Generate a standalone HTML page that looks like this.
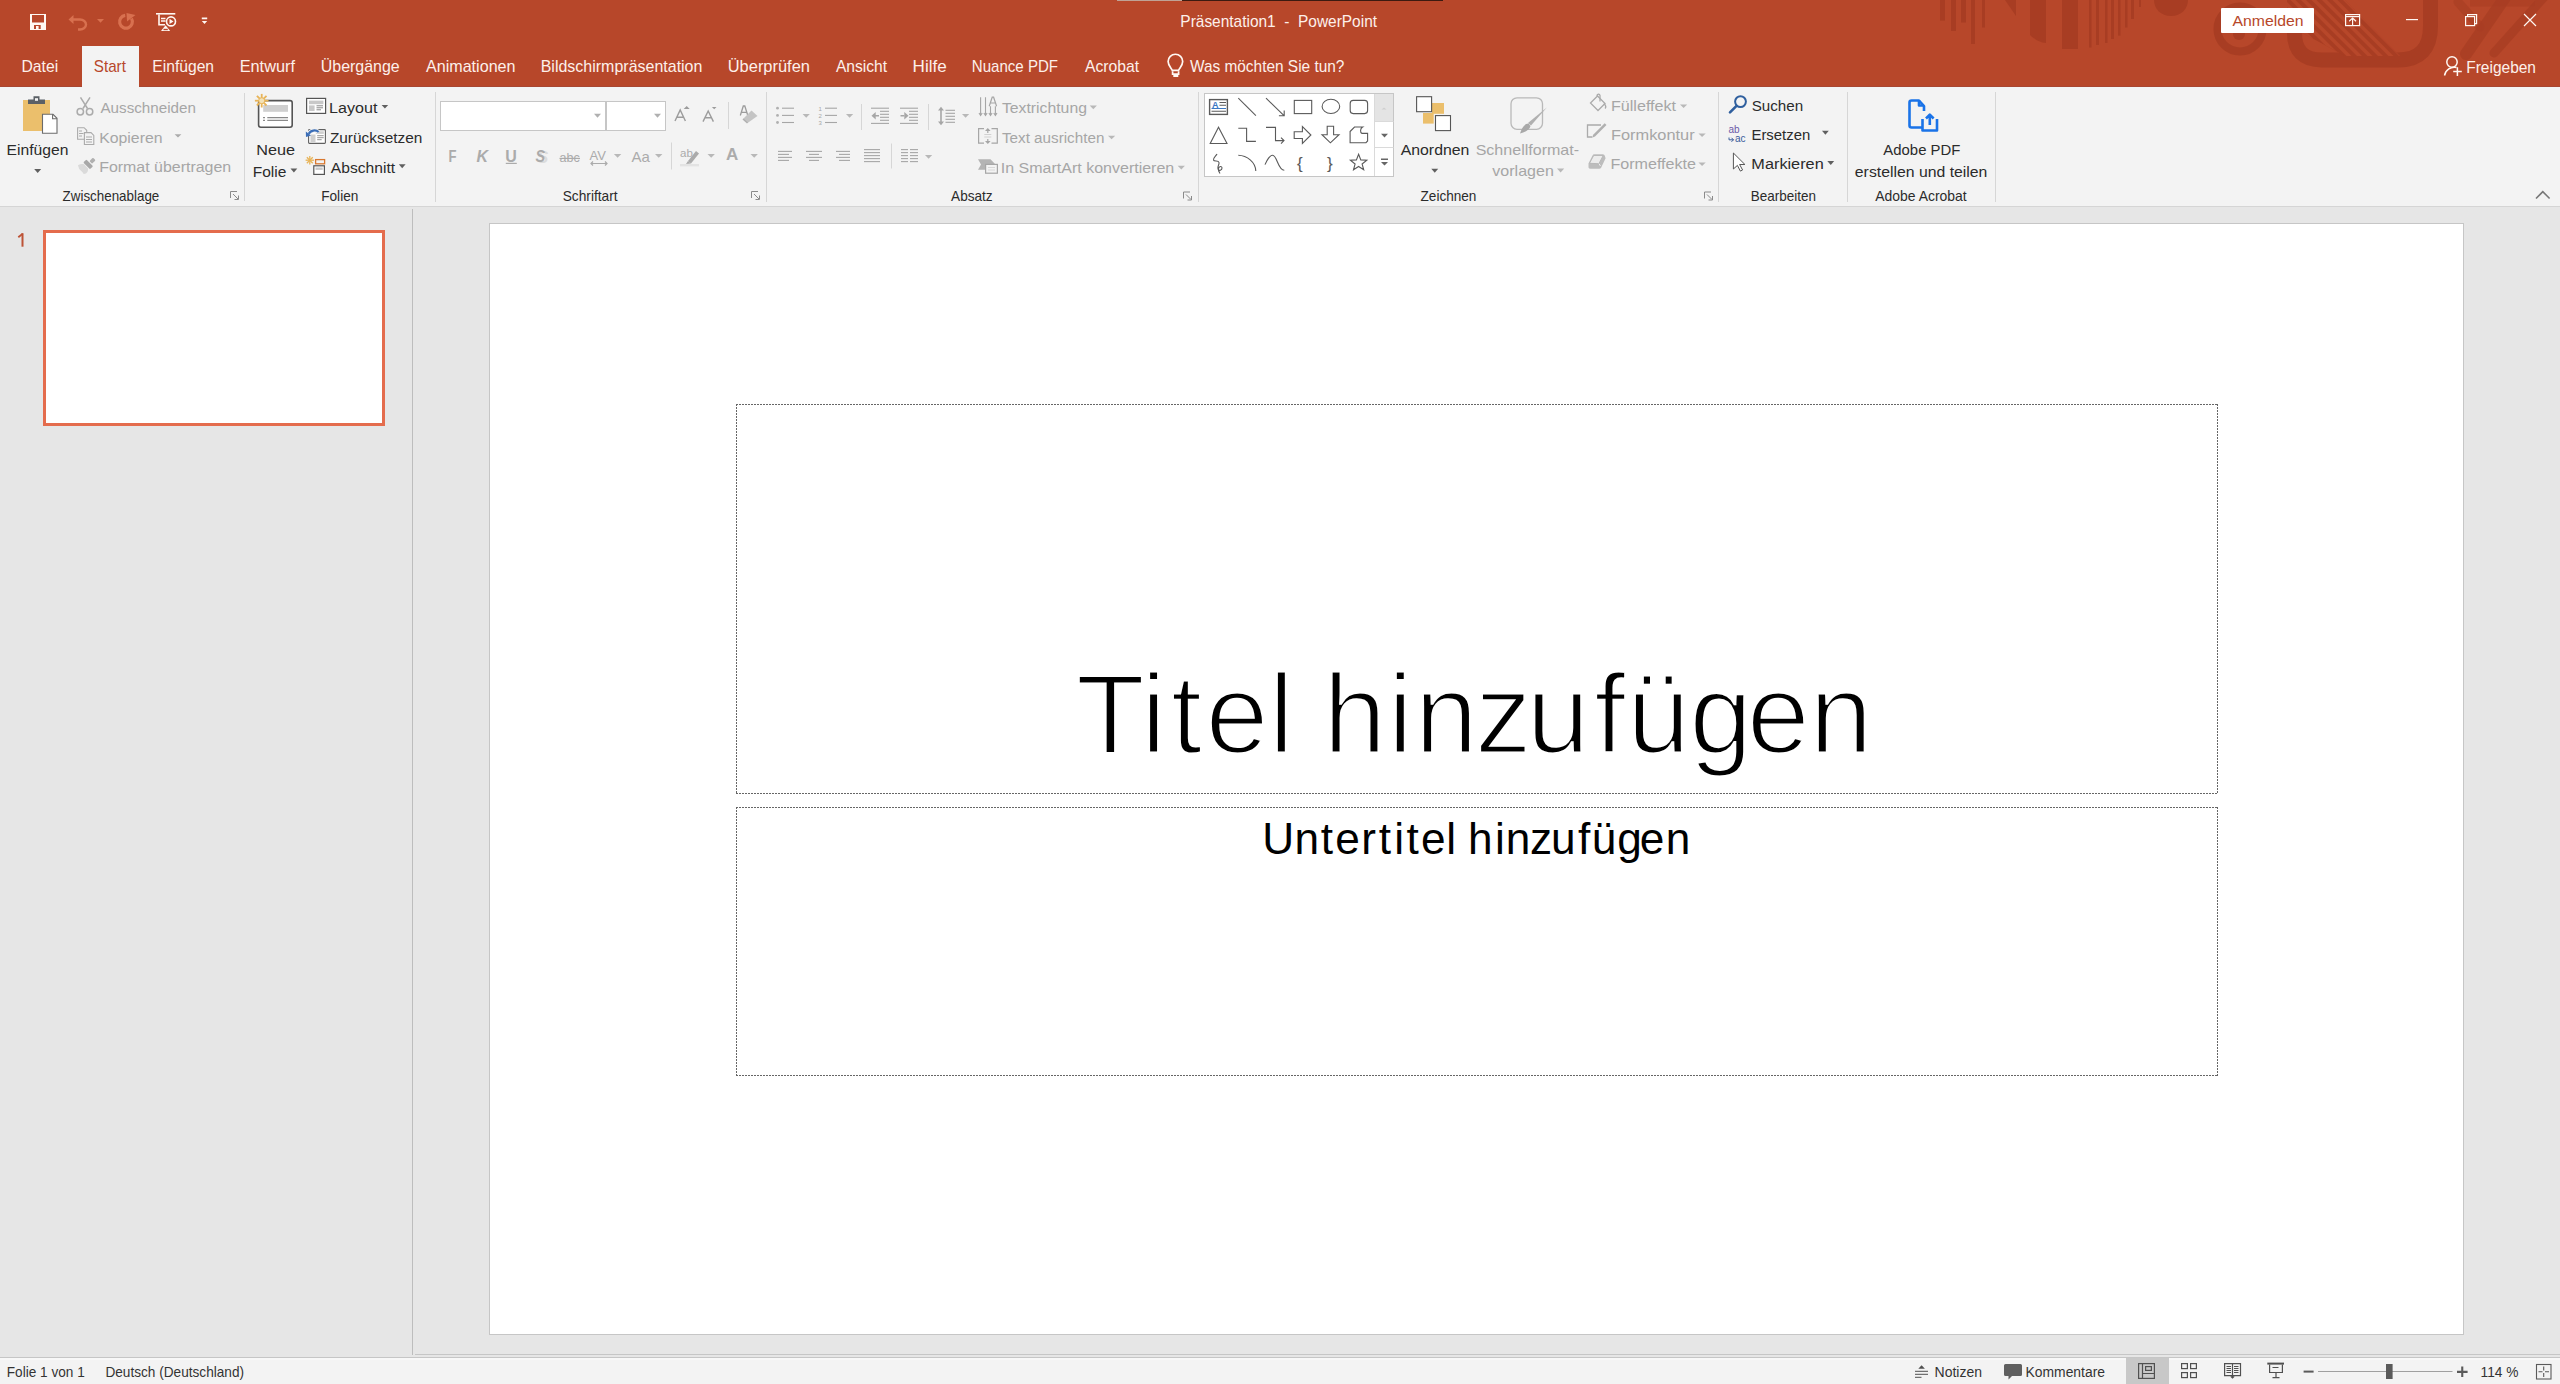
<!DOCTYPE html>
<html><head><meta charset="utf-8"><title>Präsentation1 - PowerPoint</title>
<style>
html,body{margin:0;padding:0;width:2560px;height:1384px;overflow:hidden;background:#e6e6e6;font-family:"Liberation Sans",sans-serif;}
.a{position:absolute;box-sizing:border-box}
svg.ov{position:absolute;left:0;top:0}
svg text{font-family:"Liberation Sans",sans-serif;white-space:pre}
</style></head><body>
<div class="a" style="left:0;top:0;width:2560px;height:87px;background:#b7472a"></div>
<div class="a" style="left:1117px;top:0;width:65px;height:1px;background:#bfa396"></div>
<div class="a" style="left:1182px;top:0;width:261px;height:1px;background:#3c1a10"></div>
<div class="a" style="left:82px;top:46px;width:57px;height:41px;background:#f3f3f3"></div>
<div class="a" style="left:0;top:86px;width:82px;height:1px;background:#a84632"></div><div class="a" style="left:139px;top:86px;width:2421px;height:1px;background:#a84632"></div><div class="a" style="left:0;top:87px;width:2560px;height:119px;background:#f3f3f3"></div>
<div class="a" style="left:0;top:206px;width:2560px;height:1px;background:#d5d5d5"></div>
<div class="a" style="left:412px;top:209px;width:1px;height:1146px;background:#bdbdbd"></div>
<div class="a" style="left:43px;top:230px;width:342px;height:196px;border:3px solid #e46c4d;background:#fff"></div>
<div class="a" style="left:489px;top:223px;width:1975px;height:1112px;border:1px solid #c6c6c6;background:#fff"></div>
<div class="a" style="left:415px;top:1354px;width:2145px;height:1px;background:#c6c6c6"></div>
<div class="a" style="left:0;top:1357px;width:2560px;height:1px;background:#c6c6c6"></div>
<div class="a" style="left:0;top:1358px;width:2560px;height:26px;background:#f3f3f3"></div><div class="a" style="left:0;top:1358px;width:2560px;height:2px;background:#f8f8f8"></div>
<div class="a" style="left:2126px;top:1358px;width:43px;height:26px;background:#c8c8c8"></div>

<svg class="ov" width="2560" height="1384" viewBox="0 0 2560 1384">
<g fill="#a63c22" opacity="0.85"><rect x="1940" y="0" width="5" height="20.6"/><rect x="1951" y="0" width="5" height="31"/><rect x="1961" y="0" width="5" height="22.5"/><rect x="1971" y="0" width="4" height="44"/><rect x="1982" y="0" width="3" height="27.5"/><rect x="2089" y="0" width="2.5" height="47.5"/><rect x="2096" y="0" width="3" height="45"/><rect x="2105" y="0" width="2.5" height="43"/><rect x="2111" y="0" width="3" height="39"/><rect x="2118" y="0" width="2.5" height="35.6"/><rect x="2125" y="0" width="2.5" height="27.5"/><rect x="2131" y="0" width="3" height="19"/><rect x="2139" y="0" width="2" height="7"/><path d="M2030 0h16v43c-6 0-12-4-16-8z"/><path d="M2062 0h16v49h-16z"/><path d="M2005 0h11v16z"/><path d="M2154 0h34c0 9-7 16-17 16s-17-7-17-16z"/><circle cx="2240" cy="29" r="22.5" fill="none" stroke="#a63c22" stroke-width="8"/><circle cx="2239" cy="34" r="6" /><path d="M2294.5 -5V33Q2294.5 60 2322 60H2398Q2430.5 60 2430.5 26V-5" fill="none" stroke="#a63c22" stroke-width="15"/><clipPath id="rc"><path d="M2287 0H2345L2400 56H2345L2287 25z"/></clipPath><g clip-path="url(#rc)"><path d="M2287 0H2345L2400 56H2345L2287 25z"/></g><g clip-path="url(#rc)" stroke="#b7472a" stroke-width="3.5"><path d="M2241.0 -10L2321.0 70"/><path d="M2251.5 -10L2331.5 70"/><path d="M2262.0 -10L2342.0 70"/><path d="M2272.5 -10L2352.5 70"/><path d="M2283.0 -10L2363.0 70"/><path d="M2293.5 -10L2373.5 70"/><path d="M2304.0 -10L2384.0 70"/><path d="M2314.5 -10L2394.5 70"/><path d="M2325.0 -10L2405.0 70"/><path d="M2335.5 -10L2415.5 70"/><path d="M2346.0 -10L2426.0 70"/></g><path d="M2506 -4L2466 54" stroke="#a63c22" stroke-width="12" stroke-linecap="round" opacity="0.75"/><path d="M2545 -4L2494 53" stroke="#a63c22" stroke-width="9" stroke-linecap="round" opacity="0.75"/><path d="M2458 2L2480 27" stroke="#a63c22" stroke-width="9" stroke-linecap="round" opacity="0.6"/><path d="M2470 3L2535 3" stroke="#a63c22" stroke-width="7" opacity="0.5"/></g>
<rect x="2221" y="8" width="93" height="25" rx="1" fill="#fff"/>
<g fill="none" stroke="#666" stroke-width="1" stroke-dasharray="2 1"><path d="M736 404.5H2218M736 793.5H2218M736.5 404V794M2217.5 404V794M736 807.5H2218M736 1075.5H2218M736.5 807V1076M2217.5 807V1076"/></g>
<path d="M21.5 233.2h2v13.5h-2z" fill="#bd5336"/><path d="M18.3 237.2l4.4-3.4" stroke="#bd5336" stroke-width="1.9"/>
<g fill="#fff8f3"><path d="M30 14h16v16h-16z M32 15v7.6h12v-7.6z M34 25v4h2v-3h2.6v3h2.1v-4z" fill-rule="evenodd"/></g>
<g fill="none" stroke="#d8704f" stroke-width="2.4"><path d="M71 19.5h9a6 5 0 0 1 0 10h-2"/></g><path d="M68.5 19.5l5-4.5v9z" fill="#d8704f"/><path d="M97 19l7 0l-3.5 3.8z" fill="#d8704f"/>
<path d="M125.2 15.4A6.4 6.4 0 1 0 131.5 18.5" fill="none" stroke="#d8704f" stroke-width="3.2"/><path d="M126.5 13L135.5 15L127 21.5z" fill="#d8704f"/>
<g fill="none" stroke="#fff8f3" stroke-width="1.6"><path d="M156 13.8h19.3"/><path d="M159 14.5v10.3h6"/><path d="M161 18.5h4.5M161 21h4.5"/><circle cx="171" cy="21.4" r="4.5"/></g><path d="M169.5 18.8l4 2.6l-4 2.6z" fill="#fff8f3"/><path d="M165.6 25.2l4.6 5.8h-9.2z" fill="#fff8f3"/><path d="M163.5 28.8h4.3v1.4h-4.3z" fill="#b7472a"/>
<path d="M201.8 17.6h5.4v1.6h-5.4z M201.8 21h5.4l-2.7 3z" fill="#fff8f3"/>
<g fill="none" stroke="#fff8f3" stroke-width="1.2"><rect x="2345.6" y="14.6" width="14" height="11"/><path d="M2345.6 16.6h14"/><path d="M2352.6 25.6v-7.4M2349.2 21.2l3.4-3.2l3.4 3.2"/><path d="M2406 19.6h12"/><rect x="2465.6" y="16.6" width="9" height="9"/><path d="M2467.6 16.6v-2h9v9h-2"/><path d="M2524 14l12 12M2536 14l-12 12"/></g>
<g fill="none" stroke="#fff8f3" stroke-width="1.7"><path d="M1172.3 70.3c-1.2-2.5-4.2-5-4.2-8.8a7.3 7.3 0 0 1 14.6 0c0 3.8-3 6.3-4.2 8.8z"/><path d="M1172.6 71.2v3h6v-3"/></g><path d="M1173.3 75h5v2h-5z" fill="#fff8f3"/>
<g fill="none" stroke="#fff8f3" stroke-width="1.5"><circle cx="2452" cy="62" r="5.2"/><path d="M2444.5 75.5a10 10 0 0 1 12-8"/><path d="M2457.4 67.3v8.6M2453.2 71.6h8.6"/></g>
<rect x="23" y="100" width="27" height="31" fill="#ebbf6c"/><path d="M28 104v-4.5h5.5v-3.3h6v3.3h5.5v4.5z" fill="#5b6066"/><rect x="35" y="98.2" width="3" height="2.6" fill="#f3f3f3"/><path d="M42.5 114.3h10.5l4 4v15h-14.5z" fill="#fff" stroke="#6b6b6b" stroke-width="1.1"/><path d="M52.6 114.3v4.4h4.4" fill="none" stroke="#6b6b6b" stroke-width="1.1"/><path d="M34.2 169h7l-3.5 4z" fill="#5f5f5f"/>
<g fill="none" stroke="#ababab" stroke-width="1.5"><path d="M80.5 97.3L87.5 108.5M90 97.3L83 108.5"/><circle cx="80.3" cy="111.8" r="3.2"/><circle cx="89.6" cy="111.8" r="3.2"/></g>
<g fill="#f3f3f3" stroke="#ababab" stroke-width="1.1"><path d="M77.6 127.7h6.5l2.6 2.6v9h-9.1z"/><path d="M84.4 132.6h6.6l2.8 2.8v9.1h-9.4z" fill="#f3f3f3"/></g><g stroke="#ababab" stroke-width="1"><path d="M79 131h3M79 133.5h4.5M79 136h3"/><path d="M86 137h6M86 139.5h6M86 142h6"/></g>
<path d="M174.6 134.2h6.8l-3.4 3.4z" fill="#ababab"/>
<g transform="rotate(45 88 164.2)"><rect x="83.5" y="162" width="9.5" height="4.4" rx="1" fill="#a8a8a8"/></g><g transform="rotate(-45 92.5 160.7)"><rect x="90" y="158.8" width="5" height="3.8" rx="1" fill="#b0b0b0"/></g><path d="M78 165.2c2-1.2 4-1.5 6-1l4 4.2c0.3 2-0.5 4-2 5l-2.3 0.5l-1-1.5l-3.5-3.5z" fill="#dadada"/>
<g fill="none" stroke="#8a8a8a" stroke-width="1"><path d="M230.5 198v-6.5h6.5"/><path d="M233 194l5 5M238.5 195.5v4h-4"/></g>
<path d="M244.5 93V201" stroke="#d6d6d6" stroke-width="1"/>
<path d="M435.5 92V202" stroke="#d6d6d6" stroke-width="1"/>
<path d="M766.5 92V202" stroke="#d6d6d6" stroke-width="1"/>
<path d="M1198.5 92V202" stroke="#d6d6d6" stroke-width="1"/>
<path d="M1718.5 92V202" stroke="#d6d6d6" stroke-width="1"/>
<path d="M1847.5 92V202" stroke="#d6d6d6" stroke-width="1"/>
<path d="M1995.5 92V202" stroke="#d6d6d6" stroke-width="1"/>
<rect x="258.6" y="100.6" width="33.6" height="26.6" rx="2.2" fill="#fff" stroke="#555" stroke-width="1.6"/><rect x="263.2" y="105" width="24.8" height="6.8" fill="#cfcfcf"/><g stroke="#8a8a8a" stroke-width="1.2"><path d="M267.3 117.6h20.7M267.3 120.4h20.7M263 117.6h2M263 120.4h2"/></g>
<g stroke="#e8b458" stroke-width="1.8"><path d="M261.7 100.7l6.80 0.00"/><path d="M261.7 100.7l4.81 4.81"/><path d="M261.7 100.7l0.00 6.80"/><path d="M261.7 100.7l-4.81 4.81"/><path d="M261.7 100.7l-6.80 0.00"/><path d="M261.7 100.7l-4.81 -4.81"/><path d="M261.7 100.7l-0.00 -6.80"/><path d="M261.7 100.7l4.81 -4.81"/></g><circle cx="261.7" cy="100.7" r="3" fill="#f3e2b8" stroke="#e8b458" stroke-width="1"/>
<path d="M290.5 168.6h6.8l-3.4 4z" fill="#5f5f5f"/>
<rect x="306.6" y="98.4" width="19" height="15" fill="#fff" stroke="#555" stroke-width="1.2"/><rect x="309" y="100.6" width="14.4" height="3.6" fill="#c8c8c8"/><rect x="309" y="105.4" width="5.6" height="5.6" fill="#c8c8c8"/><g stroke="#7a7a7a" stroke-width="0.9"><path d="M316.5 105.8h6.5M316.5 107.8h6.5M316.5 109.8h4.5"/></g><path d="M381.6 105h6.6l-3.3 3.5z" fill="#5f5f5f"/>
<rect x="308.6" y="129.6" width="16.8" height="13.8" rx="0.8" fill="#fff" stroke="#606060" stroke-width="1.1"/><rect x="310.5" y="134.5" width="5" height="7.5" fill="#cfcfcf"/><rect x="315.8" y="131.3" width="8" height="2.6" fill="#cfcfcf"/><g stroke="#8a8a8a" stroke-width="0.9"><path d="M317.2 135.7h6.5M317.2 137.7h6.5M317.2 139.7h4.5"/></g><path d="M308.8 133.8c1.5-3.5 7-4.5 9.8-1.8" fill="none" stroke="#f3f3f3" stroke-width="4"/><path d="M308.8 133.8c1.5-3.5 7-4.5 9.8-1.8" fill="none" stroke="#3c6fb8" stroke-width="2.2"/><path d="M305.8 131.5l0.2 5.5l5-1.5z" fill="#3c6fb8"/>
<rect x="315.6" y="159.6" width="9" height="4.2" fill="none" stroke="#d9782f" stroke-width="1.3"/><rect x="313.8" y="165.8" width="10.6" height="8.6" fill="#fff" stroke="#555" stroke-width="1.2"/><rect x="315.5" y="167.5" width="7.2" height="2.4" fill="#c8c8c8"/>
<g stroke="#e8b458" stroke-width="1.3"><path d="M309.8 160.2l4.20 0.00"/><path d="M309.8 160.2l2.97 2.97"/><path d="M309.8 160.2l0.00 4.20"/><path d="M309.8 160.2l-2.97 2.97"/><path d="M309.8 160.2l-4.20 0.00"/><path d="M309.8 160.2l-2.97 -2.97"/><path d="M309.8 160.2l-0.00 -4.20"/><path d="M309.8 160.2l2.97 -2.97"/></g>
<path d="M398.8 164.3h6.8l-3.4 4z" fill="#5f5f5f"/>
<rect x="440.5" y="101.5" width="165" height="29" fill="#fff" stroke="#c6c6c6" stroke-width="1"/><rect x="606.5" y="101.5" width="59" height="29" fill="#fff" stroke="#c6c6c6" stroke-width="1"/>
<path d="M594 113.8h7l-3.5 4z M654 113.8h7l-3.5 4z" fill="#b0b0b0"/>
<g fill="none" stroke="#9c9c9c" stroke-width="1.4"><path d="M675 121L680.2 110L685.4 121M677 117.3H683.5"/><path d="M703 121.6L708.2 111L713.4 121.6M705 117.8H711.5"/></g><path d="M683.7 109l3-3l3 3z M711.9 107h4.6l-2.3 2.3z" fill="#9c9c9c"/>
<path d="M728.5 102v27" stroke="#d6d6d6"/>
<path d="M740.3 115.5L743.3 106h1.5l3 9.5M741.5 112.3h5" fill="none" stroke="#9c9c9c" stroke-width="1.3"/><path d="M747.5 123l-4.5-4l8.5-8.5l6 5.5z" fill="#c4c4c4"/><path d="M743 119l4.5 4" stroke="#b0b0b0" stroke-width="1.5"/>
<g fill="#ababab" font-family="Liberation Sans" ><text transform="translate(448.6,161.6) scale(0.82,1)" font-size="16" font-weight="bold">F</text><text x="476.5" y="161.6" font-size="16" font-weight="bold" font-style="italic">K</text><text x="505.2" y="161.6" font-size="16" font-weight="bold">U</text><text x="537.5" y="162.5" font-size="16" font-weight="bold" font-style="italic" fill="#dcdcdc">S</text><text transform="translate(535.6,161.6) scale(0.9,1)" font-size="16" font-weight="bold" font-style="italic">S</text><text x="559.5" y="162.3" font-size="12.5">abc</text><text x="589.5" y="160" font-size="13">AV</text><text x="631.5" y="162" font-size="15">Aa</text><text x="726" y="160.2" font-size="17" font-weight="bold">A</text></g>
<g stroke="#ababab" stroke-width="1.2" fill="none"><path d="M505.8 163.4h11"/><path d="M559.5 158.4h20.5"/><path d="M591 163.5h16M593 161.5l-2 2l2 2M605 161.5l2 2l-2 2"/></g>
<path d="M613.9 154h7.4l-3.7 3.8z" fill="#b8b8b8"/>
<path d="M655 154h7.4l-3.7 3.8z" fill="#b8b8b8"/>
<path d="M707.5 154h7.4l-3.7 3.8z" fill="#b8b8b8"/>
<path d="M750.5 154h7.4l-3.7 3.8z" fill="#b8b8b8"/>
<path d="M671.5 142.5v27" stroke="#d6d6d6"/>
<g fill="#ababab"><text x="680" y="157" font-size="11.5" font-family="Liberation Sans">ab</text><path d="M688 161l8-10l3 2.5l-8 10z"/><path d="M686 164l2-3l3 2.5z"/></g><rect x="680" y="164" width="19" height="2.4" fill="#e3e3e3"/>
<g fill="none" stroke="#8a8a8a" stroke-width="1"><path d="M751.5 198v-6.5h6.5"/><path d="M754 194l5 5M759.5 195.5v4h-4"/></g>
<path d="M782 108.2H794" stroke="#a6a6a6" stroke-width="1.1"/><path d="M782 115.4H794" stroke="#a6a6a6" stroke-width="1.1"/><path d="M782 122.5H794" stroke="#a6a6a6" stroke-width="1.1"/>
<g fill="#b0b0b0"><circle cx="777.5" cy="108.2" r="1.4"/><circle cx="777.5" cy="115.4" r="1.4"/><circle cx="777.5" cy="122.5" r="1.4"/></g>
<path d="M825 108.2H837" stroke="#a6a6a6" stroke-width="1.1"/><path d="M825 115.4H837" stroke="#a6a6a6" stroke-width="1.1"/><path d="M825 122.5H837" stroke="#a6a6a6" stroke-width="1.1"/>
<g fill="#a6a6a6" font-size="6" font-family="Liberation Sans"><text x="818.6" y="111">1</text><text x="818.6" y="118">2</text><text x="818.6" y="125">3</text></g>
<path d="M802.6 113.9h7.2l-3.6 3.8z" fill="#b8b8b8"/>
<path d="M846 113.9h7.2l-3.6 3.8z" fill="#b8b8b8"/>
<path d="M962 113.9h7.2l-3.6 3.8z" fill="#b8b8b8"/>
<path d="M925 155h7.2l-3.6 3.8z" fill="#b8b8b8"/>
<path d="M861.5 104v26M928.5 104v26M891.5 143.5v25" stroke="#d6d6d6"/>
<path d="M871 108.2H889" stroke="#a6a6a6" stroke-width="1.1"/><path d="M871 123.4H889" stroke="#a6a6a6" stroke-width="1.1"/><path d="M880 111.3H889" stroke="#a6a6a6" stroke-width="1.1"/><path d="M880 114.3H889" stroke="#a6a6a6" stroke-width="1.1"/><path d="M880 117.3H889" stroke="#a6a6a6" stroke-width="1.1"/><path d="M880 120.3H889" stroke="#a6a6a6" stroke-width="1.1"/>
<path d="M871.5 115.8l4.2-3.8v7.6z M875 115h4v1.6h-4z" fill="#a6a6a6"/>
<path d="M900 108.2H918" stroke="#a6a6a6" stroke-width="1.1"/><path d="M900 123.4H918" stroke="#a6a6a6" stroke-width="1.1"/><path d="M909 111.3H918" stroke="#a6a6a6" stroke-width="1.1"/><path d="M909 114.3H918" stroke="#a6a6a6" stroke-width="1.1"/><path d="M909 117.3H918" stroke="#a6a6a6" stroke-width="1.1"/><path d="M909 120.3H918" stroke="#a6a6a6" stroke-width="1.1"/>
<path d="M908.5 115.8l-4.2-3.8v7.6z M900.5 115h4v1.6h-4z" fill="#a6a6a6"/>
<path d="M945.5 110.3H955" stroke="#a6a6a6" stroke-width="1.1"/><path d="M945.5 113.3H955" stroke="#a6a6a6" stroke-width="1.1"/><path d="M945.5 116.3H955" stroke="#a6a6a6" stroke-width="1.1"/><path d="M945.5 119.3H955" stroke="#a6a6a6" stroke-width="1.1"/><path d="M945.5 122.3H955" stroke="#a6a6a6" stroke-width="1.1"/>
<path d="M938 110.5l3-3.8l3 3.8z M938 121.5l3 3.8l3-3.8z" fill="#a6a6a6"/><path d="M941 110v12" stroke="#a6a6a6" stroke-width="1.6"/>
<g stroke="#a6a6a6" stroke-width="1.1" fill="none"><path d="M980.6 97.3v17.5M985.5 97.3v17.5M990.5 106.3v8.5M995.4 106.3v8.5"/><path d="M979 113l1.6 2.4l1.6-2.4M983.9 113l1.6 2.4l1.6-2.4M988.9 113l1.6 2.4l1.6-2.4M993.8 113l1.6 2.4l1.6-2.4"/><path d="M989.2 106.2l3-9h1.4l3 9M990.3 103h5.2" stroke-width="1.2"/></g><path d="M1089.7 105.6h7.2l-3.6 3.6z" fill="#b8b8b8"/>
<g fill="none" stroke="#a6a6a6" stroke-width="1.2"><path d="M984 128.6h-5.4v14.6h5.4M991.5 128.6h5.8v14.6h-5.8"/><path d="M987.8 133v-4M987.8 139v4"/><path d="M984.3 134.5h7M984.3 137h7" stroke="#c8c8c8" stroke-width="0.8"/></g><path d="M985 131l2.8-3l2.8 3z M985 141l2.8 3l2.8-3z" fill="#a6a6a6"/><path d="M1108 135.7h7.2l-3.6 3.6z" fill="#b8b8b8"/>
<path d="M978 159.2h12.5l4.5 4.8h-9.5v5.7h-7.5l3-5.3z" fill="#b4b4b4"/><rect x="985.6" y="164.4" width="11.8" height="8.8" fill="#f3f3f3" stroke="#a6a6a6" stroke-width="1.2"/><path d="M988 167.5h7M988 170h7" stroke="#d0d0d0" stroke-width="0.8"/><path d="M1177.7 165.8h7.2l-3.6 3.6z" fill="#b8b8b8"/>
<path d="M778 151.4H792" stroke="#a6a6a6" stroke-width="1.1"/><path d="M778 154.4H789" stroke="#a6a6a6" stroke-width="1.1"/><path d="M778 157.4H792" stroke="#a6a6a6" stroke-width="1.1"/><path d="M778 160.4H789" stroke="#a6a6a6" stroke-width="1.1"/>
<path d="M806 151.4H822" stroke="#a6a6a6" stroke-width="1.1"/><path d="M809 154.4H819" stroke="#a6a6a6" stroke-width="1.1"/><path d="M806 157.4H822" stroke="#a6a6a6" stroke-width="1.1"/><path d="M809 160.4H819" stroke="#a6a6a6" stroke-width="1.1"/>
<path d="M836 151.4H850" stroke="#a6a6a6" stroke-width="1.1"/><path d="M839 154.4H850" stroke="#a6a6a6" stroke-width="1.1"/><path d="M836 157.4H850" stroke="#a6a6a6" stroke-width="1.1"/><path d="M839 160.4H850" stroke="#a6a6a6" stroke-width="1.1"/>
<path d="M864 149.6H880" stroke="#a6a6a6" stroke-width="1.1"/><path d="M864 152.6H880" stroke="#a6a6a6" stroke-width="1.1"/><path d="M864 155.6H880" stroke="#a6a6a6" stroke-width="1.1"/><path d="M864 158.6H880" stroke="#a6a6a6" stroke-width="1.1"/><path d="M864 161.6H880" stroke="#a6a6a6" stroke-width="1.1"/>
<path d="M901 149.6H908" stroke="#a6a6a6" stroke-width="1.1"/><path d="M910 149.6H918" stroke="#a6a6a6" stroke-width="1.1"/><path d="M901 152.6H908" stroke="#a6a6a6" stroke-width="1.1"/><path d="M910 152.6H918" stroke="#a6a6a6" stroke-width="1.1"/><path d="M901 155.6H908" stroke="#a6a6a6" stroke-width="1.1"/><path d="M910 155.6H918" stroke="#a6a6a6" stroke-width="1.1"/><path d="M901 158.6H908" stroke="#a6a6a6" stroke-width="1.1"/><path d="M910 158.6H918" stroke="#a6a6a6" stroke-width="1.1"/><path d="M901 161.6H908" stroke="#a6a6a6" stroke-width="1.1"/><path d="M910 161.6H918" stroke="#a6a6a6" stroke-width="1.1"/>
<g fill="none" stroke="#8a8a8a" stroke-width="1"><path d="M1183.5 198.5v-6.5h6.5"/><path d="M1186 194.5l5 5M1191.5 196.0v4h-4"/></g>
<rect x="1204.5" y="93.5" width="189" height="83" fill="#fff" stroke="#c6c6c6"/><rect x="1375" y="94" width="18" height="27.2" fill="#e4e4e4"/><path d="M1374.5 94v82M1375 121.5h18.5M1375 147.5h18.5" stroke="#dadada"/><path d="M1381.5 109.5h5l-2.5-2z" fill="#cfcfcf"/><path d="M1381 133.8h7l-3.5 3.6z" fill="#666"/><path d="M1381 158.6h7v1.4h-7z M1381 162h7l-3.5 3.6z" fill="#666"/>
<g fill="none" stroke="#5a5a5a" stroke-width="1.1"><rect x="1209.6" y="99.6" width="17.8" height="14.8" stroke-width="1.4"/><path d="M1219.5 102.5h6.5M1219.5 105.3h6.5M1211.5 111.3h14.5"/><path d="M1238.3 98.2L1255.9 115.6"/><path d="M1266 98.2L1284 115.6M1284.2 110.5v5.3h-5.3"/><rect x="1294.3" y="100.4" width="17.4" height="13.2"/><ellipse cx="1330.9" cy="106.4" rx="8.8" ry="7.1"/><rect x="1350.2" y="100.4" width="17.4" height="13.2" rx="3"/><path d="M1218.5 127.3L1210.2 143.5H1227Z"/><path d="M1238.3 128.3H1246.6V141.4H1255.9"/><path d="M1266 127.4H1275.5V140.6H1284M1281 137.6l3 3l-3 3"/><path d="M1294.2 131.7H1302.4V126.5L1310.9 135L1302.4 143.5V138.5H1294.2Z"/><path d="M1327.2 126.3H1333.6V134.7H1339L1330.4 142.8L1322 134.7H1327.2Z"/><path d="M1350.1 131.5L1354.5 127H1362.6C1360 128.5 1360 132.5 1362 133.4H1367.6V141L1366 142.7H1350.1Z"/><path d="M1217 154c-1 2-4 4-3.5 6s5 0 5.5 2.5s-2 4-1 6.5s4 1 4 -1s-3 -2 -3.5 0.5s1 4 1.5 5"/><path d="M1238.3 155.2C1247 155.5 1255.5 162 1255.8 171"/><path d="M1265 164.6C1267 160 1269.5 155.3 1272.7 155.3C1277 155.3 1278 170.3 1284.3 170.3"/></g>
<g fill="#5a5a5a" font-family="Liberation Sans" font-size="17"><text x="1297" y="169">{</text><text x="1327" y="169">}</text></g>
<path d="M1358.6 154.2L1360.8 159.9L1366.8 160.2L1362.1 164L1363.7 169.8L1358.6 166.5L1353.5 169.8L1355.1 164L1350.4 160.2L1356.4 159.9Z" fill="none" stroke="#5a5a5a" stroke-width="1.1"/>
<text x="1212" y="107.5" font-size="9" font-weight="bold" fill="#3c78c3" font-family="Liberation Sans">A</text><path d="M1211.5 108.5h14.5" stroke="#3c78c3" stroke-width="1"/>
<rect x="1432" y="103" width="12" height="10.8" fill="#ebbf6c"/><rect x="1423" y="113" width="10.7" height="10.6" fill="#ebbf6c"/><rect x="1416.6" y="96.7" width="15" height="15" fill="#fff" stroke="#555" stroke-width="1.1"/><rect x="1435.5" y="115.6" width="15" height="15" fill="#fff" stroke="#555" stroke-width="1.1"/><path d="M1431.3 168.8h6.9l-3.45 4z" fill="#5f5f5f"/>
<rect x="1511" y="97.8" width="31.5" height="31.5" rx="6" fill="none" stroke="#b9b9b9" stroke-width="1.3"/><path d="M1546.8 107.5L1531 125.5l-3-2.5z" fill="#b0b0b0"/><path d="M1528.5 123.5c-4 0-7 5-8.5 10c5-1 10-4 10.5-7.5z" fill="#a8a8a8"/><path d="M1557 168.6h7.2l-3.6 3.8z" fill="#b8b8b8"/>
<g fill="none" stroke="#ababab" stroke-width="1.3"><path d="M1590.5 103l7-7l7.5 7.5l-7 7z"/><path d="M1597 96c0-2 2.5-2.5 3-0.5v6"/></g><path d="M1604 103.5c1.5 1.5 2.5 3.5 1 5" stroke="#ababab" fill="none" stroke-width="1.3"/><path d="M1680 104.5h7.2l-3.6 3.6z" fill="#b8b8b8"/>
<g fill="none" stroke="#ababab" stroke-width="1.3"><path d="M1601 125H1587.5V137H1592"/></g><path d="M1606.5 125l-11.5 11.5l-3 1.2l1.2-3l11.5-11.5z" fill="#b0b0b0"/><path d="M1698.5 133.5h7.2l-3.6 3.6z" fill="#b8b8b8"/>
<path d="M1588.5 163.5l4-8a2 2 0 0 1 1.8-1.2h8.5a2 2 0 0 1 2 1.5l0.8 2.5l-4.5 9.5a2 2 0 0 1-1.8 1h-9a2 2 0 0 1-1.8-1.3z" fill="#bdbdbd"/><path d="M1589.5 163.3l4.2-7.8h9.5l-4.3 8.2z" fill="#ececec" stroke="#b5b5b5" stroke-width="0.9"/><path d="M1599 163.7l1.5 2.3" stroke="#f3f3f3" stroke-width="0.9"/><path d="M1698.5 162.5h7.2l-3.6 3.6z" fill="#b8b8b8"/>
<g fill="none" stroke="#8a8a8a" stroke-width="1"><path d="M1704.5 198.5v-6.5h6.5"/><path d="M1707 194.5l5 5M1712.5 196.0v4h-4"/></g>
<circle cx="1740.5" cy="101.6" r="5.4" fill="none" stroke="#2f5f9e" stroke-width="2"/><path d="M1736.5 105.8L1730 112.3" stroke="#2f5f9e" stroke-width="2.6" stroke-linecap="round"/>
<g font-family="Liberation Sans" font-size="10"><text x="1728.5" y="133" fill="#6b5aa8">ab</text><text x="1735" y="142.2" fill="#3a5d9c">ac</text></g><path d="M1729 137.5l0 2.3h4.5M1731.5 137.8l2 2l-2 2" fill="none" stroke="#3a5d9c" stroke-width="1"/><path d="M1822 130.7h6.8l-3.4 4z" fill="#5f5f5f"/>
<path d="M1733.4 153v16l4-3.6l3 5.7l2.2-1.1l-3-5.5h5.3z" fill="#fff" stroke="#555" stroke-width="1"/><path d="M1827.3 161h6.9l-3.45 4z" fill="#5f5f5f"/>
<g fill="none" stroke="#1a73e8" stroke-width="2.6" stroke-linejoin="round"><path d="M1922 127.5h-10.5a2 2 0 0 1-2-2v-23a2 2 0 0 1 2-2h7.5l5 5.5v5"/><path d="M1919 100.5v5h5"/><path d="M1922.5 119v11.5h14.5v-11.5"/><path d="M1929.8 125v-9.5M1926 118.5l3.8-3.8l3.8 3.8"/></g>
<path d="M2536 198.5l6.8-6.8l6.8 6.8" fill="none" stroke="#777" stroke-width="1.6"/>
<path d="M1918.3 1368.8l3.3-3.6l3.3 3.6z" fill="#505050"/><g stroke="#505050" stroke-width="1"><path d="M1915 1371.3h13M1915 1374.3h13M1915 1377.3h6.5"/></g>
<path d="M2005.5 1364h15a1.5 1.5 0 0 1 1.5 1.5v9a1.5 1.5 0 0 1-1.5 1.5h-8.5l-3.5 3.5v-3.5h-3a1.5 1.5 0 0 1-1.5-1.5v-9a1.5 1.5 0 0 1 1.5-1.5z" fill="#5f5f5f"/>
<g fill="none" stroke="#505050" stroke-width="1.2"><rect x="2138.6" y="1363.6" width="15.8" height="14.8"/><path d="M2142.5 1364v14.5M2142.5 1373.5h12"/><rect x="2145.6" y="1366.6" width="5.8" height="3.8"/><rect x="2181.6" y="1363.6" width="5.8" height="5"/><rect x="2190.6" y="1363.6" width="5.8" height="5"/><rect x="2181.6" y="1372.6" width="5.8" height="5"/><rect x="2190.6" y="1372.6" width="5.8" height="5"/><path d="M2224.6 1363.6h7.9v12h-7.9zM2232.5 1363.6h8v12h-8z"/><path d="M2226.5 1366.5h4.5M2226.5 1368.5h4.5M2226.5 1370.5h4.5M2226.5 1372.5h4.5M2234 1366.5h4.5M2234 1368.5h4.5M2234 1370.5h4.5M2234 1372.5h4.5"/><path d="M2232.5 1375.5v2.5M2230.8 1376.3l1.7 1.7l1.7-1.7"/><path d="M2269.6 1364.5v8h12.8v-8M2272.5 1367.5h6M2276 1372.5v5M2272.5 1377.6h7"/></g><rect x="2267.3" y="1362.6" width="16.7" height="2" fill="#505050"/>
<path d="M2303.6 1370.6h10v2h-10z" fill="#5a5a5a"/><path d="M2318 1371.5h134.5" stroke="#a0a0a0" stroke-width="1"/><rect x="2386" y="1364" width="6.6" height="15" fill="#5a5a5a"/><path d="M2457 1370.8h10.6v2.1h-10.6zM2461.2 1366.5h2.1v10.6h-2.1z" fill="#5a5a5a"/>
<g fill="none" stroke="#5a5a5a" stroke-width="1.1"><rect x="2536.5" y="1364.5" width="14.5" height="14.5"/><path d="M2543.7 1366.5v4M2543.7 1373v4M2538.5 1371.7h4M2545 1371.7h4"/></g>
<text transform="translate(1180.33,27) scale(0.9543,1)" font-size="16.2" fill="#fdf0ea">Präsentation1  -  PowerPoint</text><text transform="translate(2232.47,26) scale(1.0181,1)" font-size="15.5" fill="#b7472a">Anmelden</text><text transform="translate(2466.23,73) scale(0.9565,1)" font-size="16.2" fill="#fdf0ea">Freigeben</text><text transform="translate(21.51,72) scale(0.9600,1)" font-size="16.4" fill="#fdf0ea">Datei</text><text transform="translate(152.32,72) scale(0.9545,1)" font-size="16.4" fill="#fdf0ea">Einfügen</text><text transform="translate(239.66,72) scale(0.9951,1)" font-size="16.4" fill="#fdf0ea">Entwurf</text><text transform="translate(320.77,72) scale(0.9727,1)" font-size="16.4" fill="#fdf0ea">Übergänge</text><text transform="translate(425.97,72) scale(0.9826,1)" font-size="16.4" fill="#fdf0ea">Animationen</text><text transform="translate(540.69,72) scale(0.9756,1)" font-size="16.4" fill="#fdf0ea">Bildschirmpräsentation</text><text transform="translate(727.73,72) scale(1.0035,1)" font-size="16.4" fill="#fdf0ea">Überprüfen</text><text transform="translate(835.97,72) scale(0.9510,1)" font-size="16.4" fill="#fdf0ea">Ansicht</text><text transform="translate(912.60,72) scale(1.0412,1)" font-size="16.4" fill="#fdf0ea">Hilfe</text><text transform="translate(971.76,72) scale(0.9196,1)" font-size="16.4" fill="#fdf0ea">Nuance PDF</text><text transform="translate(1084.97,72) scale(0.9580,1)" font-size="16.4" fill="#fdf0ea">Acrobat</text><text transform="translate(1189.92,72) scale(0.9408,1)" font-size="16.4" fill="#fdf0ea">Was möchten Sie tun?</text><text transform="translate(93.80,72) scale(0.9269,1)" font-size="16.4" fill="#b7472a">Start</text><text transform="translate(6.51,154.7) scale(1.0453,1)" font-size="15" fill="#2b2b2b">Einfügen</text><text transform="translate(100.47,112.7) scale(1.0137,1)" font-size="15" fill="#a6a6a6">Ausschneiden</text><text transform="translate(99.20,142.8) scale(1.0564,1)" font-size="15" fill="#a6a6a6">Kopieren</text><text transform="translate(99.19,172.3) scale(1.0637,1)" font-size="15" fill="#a6a6a6">Format übertragen</text><text transform="translate(62.57,200.6) scale(0.9570,1)" font-size="14" fill="#2b2b2b">Zwischenablage</text><text transform="translate(256.17,154.8) scale(1.0836,1)" font-size="15" fill="#2b2b2b">Neue</text><text transform="translate(252.73,176.6) scale(1.0354,1)" font-size="15" fill="#2b2b2b">Folie</text><text transform="translate(329.08,112.7) scale(1.0730,1)" font-size="15" fill="#2b2b2b">Layout</text><text transform="translate(329.91,142.8) scale(1.0274,1)" font-size="15" fill="#2b2b2b">Zurücksetzen</text><text transform="translate(330.87,172.5) scale(1.0413,1)" font-size="15" fill="#2b2b2b">Abschnitt</text><text transform="translate(321.18,200.6) scale(0.9757,1)" font-size="14" fill="#2b2b2b">Folien</text><text transform="translate(562.67,201) scale(0.9824,1)" font-size="14" fill="#2b2b2b">Schriftart</text><text transform="translate(1001.95,112.5) scale(1.0518,1)" font-size="15" fill="#a6a6a6">Textrichtung</text><text transform="translate(1001.96,142.6) scale(1.0154,1)" font-size="15" fill="#a6a6a6">Text ausrichten</text><text transform="translate(1000.83,172.7) scale(1.0680,1)" font-size="15" fill="#a6a6a6">In SmartArt konvertieren</text><text transform="translate(951.07,200.6) scale(0.9722,1)" font-size="14" fill="#2b2b2b">Absatz</text><text transform="translate(1400.67,154.7) scale(1.0570,1)" font-size="15" fill="#2b2b2b">Anordnen</text><text transform="translate(1475.66,154.7) scale(1.0707,1)" font-size="15" fill="#a6a6a6">Schnellformat-</text><text transform="translate(1492.34,176.2) scale(1.0707,1)" font-size="15" fill="#a6a6a6">vorlagen</text><text transform="translate(1610.98,110.6) scale(1.0751,1)" font-size="15" fill="#a6a6a6">Fülleffekt</text><text transform="translate(1610.96,139.9) scale(1.0918,1)" font-size="15" fill="#a6a6a6">Formkontur</text><text transform="translate(1610.38,168.6) scale(1.0749,1)" font-size="15" fill="#a6a6a6">Formeffekte</text><text transform="translate(1420.57,200.8) scale(0.9709,1)" font-size="14" fill="#2b2b2b">Zeichnen</text><text transform="translate(1751.70,111.2) scale(1.0122,1)" font-size="15" fill="#2b2b2b">Suchen</text><text transform="translate(1751.48,139.8) scale(0.9932,1)" font-size="15" fill="#2b2b2b">Ersetzen</text><text transform="translate(1751.36,168.7) scale(1.0855,1)" font-size="15" fill="#2b2b2b">Markieren</text><text transform="translate(1750.80,200.7) scale(0.9625,1)" font-size="14" fill="#2b2b2b">Bearbeiten</text><text transform="translate(1883.37,155) scale(0.9932,1)" font-size="15" fill="#2b2b2b">Adobe PDF</text><text transform="translate(1854.84,176.8) scale(1.0539,1)" font-size="15" fill="#2b2b2b">erstellen und teilen</text><text transform="translate(1875.27,200.7) scale(0.9964,1)" font-size="14" fill="#2b2b2b">Adobe Acrobat</text><text transform="translate(1075.66,753) scale(1.0000,1)" font-size="113.4" fill="#000" stroke="#fff" stroke-width="3">T</text><text transform="translate(1141.11,753) scale(1.0000,1)" font-size="113.4" fill="#000" stroke="#fff" stroke-width="3">i</text><text transform="translate(1170.73,753) scale(1.0000,1)" font-size="113.4" fill="#000" stroke="#fff" stroke-width="3">t</text><text transform="translate(1205.59,753) scale(1.0000,1)" font-size="113.4" fill="#000" stroke="#fff" stroke-width="3">e</text><text transform="translate(1268.86,753) scale(1.0000,1)" font-size="113.4" fill="#000" stroke="#fff" stroke-width="3">l</text><text transform="translate(1323.30,753) scale(1.0000,1)" font-size="113.4" fill="#000" stroke="#fff" stroke-width="3">h</text><text transform="translate(1387.81,753) scale(1.0000,1)" font-size="113.4" fill="#000" stroke="#fff" stroke-width="3">i</text><text transform="translate(1414.77,753) scale(1.0000,1)" font-size="113.4" fill="#000" stroke="#fff" stroke-width="3">n</text><text transform="translate(1474.91,753) scale(1.0000,1)" font-size="113.4" fill="#000" stroke="#fff" stroke-width="3">z</text><text transform="translate(1526.38,753) scale(1.0000,1)" font-size="113.4" fill="#000" stroke="#fff" stroke-width="3">u</text><text transform="translate(1593.89,753) scale(1.0000,1)" font-size="113.4" fill="#000" stroke="#fff" stroke-width="3">f</text><text transform="translate(1626.84,753) scale(1.0000,1)" font-size="113.4" fill="#000" stroke="#fff" stroke-width="3">ü</text><text transform="translate(1689.32,753) scale(1.0000,1)" font-size="113.4" fill="#000" stroke="#fff" stroke-width="3">g</text><text transform="translate(1746.69,753) scale(1.0000,1)" font-size="113.4" fill="#000" stroke="#fff" stroke-width="3">e</text><text transform="translate(1809.42,753) scale(1.0000,1)" font-size="113.4" fill="#000" stroke="#fff" stroke-width="3">n</text><text transform="translate(1262.24,853.6) scale(1.0000,1)" font-size="44.2" fill="#000">U</text><text transform="translate(1294.59,853.6) scale(1.0000,1)" font-size="44.2" fill="#000">n</text><text transform="translate(1320.68,853.6) scale(1.0000,1)" font-size="44.2" fill="#000">t</text><text transform="translate(1335.26,853.6) scale(1.0000,1)" font-size="44.2" fill="#000">e</text><text transform="translate(1361.31,853.6) scale(1.0000,1)" font-size="44.2" fill="#000">r</text><text transform="translate(1378.68,853.6) scale(1.0000,1)" font-size="44.2" fill="#000">t</text><text transform="translate(1394.34,853.6) scale(1.0000,1)" font-size="44.2" fill="#000">i</text><text transform="translate(1406.43,853.6) scale(1.0000,1)" font-size="44.2" fill="#000">t</text><text transform="translate(1421.01,853.6) scale(1.0000,1)" font-size="44.2" fill="#000">e</text><text transform="translate(1446.29,853.6) scale(1.0000,1)" font-size="44.2" fill="#000">l</text><text transform="translate(1468.12,853.6) scale(1.0000,1)" font-size="44.2" fill="#000">h</text><text transform="translate(1494.89,853.6) scale(1.0000,1)" font-size="44.2" fill="#000">i</text><text transform="translate(1505.69,853.6) scale(1.0000,1)" font-size="44.2" fill="#000">n</text><text transform="translate(1530.10,853.6) scale(1.0000,1)" font-size="44.2" fill="#000">z</text><text transform="translate(1550.93,853.6) scale(1.0000,1)" font-size="44.2" fill="#000">u</text><text transform="translate(1578.02,853.6) scale(1.0000,1)" font-size="44.2" fill="#000">f</text><text transform="translate(1591.65,853.6) scale(1.0000,1)" font-size="44.2" fill="#000">ü</text><text transform="translate(1617.15,853.6) scale(1.0000,1)" font-size="44.2" fill="#000">g</text><text transform="translate(1639.66,853.6) scale(1.0000,1)" font-size="44.2" fill="#000">e</text><text transform="translate(1665.64,853.6) scale(1.0000,1)" font-size="44.2" fill="#000">n</text><text transform="translate(6.78,1376.9) scale(0.9526,1)" font-size="14.3" fill="#333333">Folie 1 von 1</text><text transform="translate(105.38,1376.9) scale(0.9534,1)" font-size="14.3" fill="#333333">Deutsch (Deutschland)</text><text transform="translate(1934.55,1376.9) scale(0.9811,1)" font-size="14.3" fill="#333333">Notizen</text><text transform="translate(2025.56,1376.9) scale(0.9717,1)" font-size="14.3" fill="#333333">Kommentare</text><text transform="translate(2480.56,1377) scale(0.9473,1)" font-size="14.5" fill="#333333">114 %</text>
</svg>
</body></html>
